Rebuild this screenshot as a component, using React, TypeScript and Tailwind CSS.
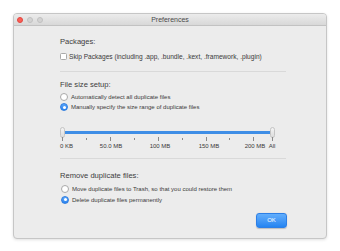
import React from 'react';

const font = { fontFamily: '"Liberation Sans", Arial, sans-serif' };

const Radio = ({ checked }: { checked?: boolean }) =>
  checked ? (
    <span className="flex h-[8px] w-[8px] shrink-0 items-center justify-center rounded-full border border-[#2f7de0] bg-gradient-to-b from-[#5aa6fa] to-[#2a84ef]">
      <span className="h-[3px] w-[3px] rounded-full bg-white" />
    </span>
  ) : (
    <span className="h-[8px] w-[8px] shrink-0 rounded-full border border-[#a9a9a9] bg-white" />
  );

const RadioRow = ({ label, checked }: { label: string; checked?: boolean }) => (
  <div className="flex h-[10px] items-center gap-[3px]">
    <Radio checked={checked} />
    <span className="text-[6px] leading-[8px] text-[#3a3a3a]">{label}</span>
  </div>
);

const Heading = ({ children, className = '' }: { children: React.ReactNode; className?: string }) => (
  <div className={`text-[7.6px] leading-[9px] text-[#3c3c3c] ${className}`}>{children}</div>
);

// tick x positions relative to the slider box (box starts at page x 60)
const ticks = [
  { x: 2, long: true },
  { x: 26 },
  { x: 50, long: true },
  { x: 74 },
  { x: 98, long: true },
  { x: 122 },
  { x: 146, long: true },
  { x: 169 },
  { x: 193, long: true },
  { x: 212, long: true },
];

const labels = [
  { text: '0 KB', x: 0, align: 'left' },
  { text: '50.0 MB', x: 51 },
  { text: '100 MB', x: 100 },
  { text: '150 MB', x: 149 },
  { text: '200 MB', x: 195 },
  { text: 'All', x: 212 },
];

const SizeSlider = () => (
  <div className="relative h-[26px] w-[226px]">
    <div className="absolute left-[4px] top-[5px] h-[3px] w-[208px] rounded-full bg-[#3f8ee6]" />
    <div className="absolute left-[0px] top-[1px] h-[11px] w-[5px] rounded-[3px] border border-[#c4c4c4] bg-gradient-to-b from-[#f4f4f4] to-[#dcdcdc]" />
    <div className="absolute left-[210px] top-[1px] h-[11px] w-[5px] rounded-[3px] border border-[#c4c4c4] bg-gradient-to-b from-[#f4f4f4] to-[#dcdcdc]" />
    <svg className="absolute left-0 top-[11px]" width="226" height="5">
      {ticks.map((t, i) => (
        <line
          key={i}
          x1={t.x + 0.5}
          x2={t.x + 0.5}
          y1={t.long ? 0 : 1}
          y2={t.long ? 4 : 3}
          stroke="#8a8a8a"
          strokeWidth="1"
        />
      ))}
    </svg>
    {labels.map((l) => (
      <span
        key={l.text}
        className={`absolute top-[17px] whitespace-nowrap text-[6px] leading-[7px] text-[#3a3a3a] ${
          l.align === 'left' ? '' : '-translate-x-1/2'
        }`}
        style={{ left: l.x }}
      >
        {l.text}
      </span>
    ))}
  </div>
);

export default function App() {
  return (
    <div className="h-[251px] w-[340px] bg-white pl-[13px] pt-[13px]" style={font}>
      <div className="flex h-[226px] w-[314px] flex-col overflow-hidden rounded-[4px] border border-[#c6c6c6] bg-[#ececec] shadow-[0_1px_3px_rgba(0,0,0,0.12)]">
        {/* title bar */}
        <div className="relative flex h-[12px] shrink-0 items-center justify-center border-b border-[#c2c2c2] bg-gradient-to-b from-[#ececec] to-[#d8d8d8]">
          <div className="absolute left-[3px] top-[2.5px] flex gap-[4px]">
            <span className="h-[6px] w-[6px] rounded-full bg-[#fb5f57] border border-[#e2463f]" />
            <span className="h-[6px] w-[6px] rounded-full bg-[#d3d3d3] border border-[#c0c0c0]" />
            <span className="h-[6px] w-[6px] rounded-full bg-[#d3d3d3] border border-[#c0c0c0]" />
          </div>
          <span className="text-[7px] leading-[9px] text-[#4a4a4a]">Preferences</span>
        </div>

        <div className="flex flex-1 flex-col pl-[46px] pr-[40px]">
          <Heading className="mt-[11px]">Packages:</Heading>
          <div className="mt-[6px] flex h-[9px] items-center gap-[2px]">
            <span className="h-[7px] w-[7px] shrink-0 rounded-[1.5px] border border-[#a9a9a9] bg-white" />
            <span className="text-[6.6px] leading-[8px] text-[#3a3a3a]">
              Skip Packages (including .app, .bundle, .kext, .framework, .plugin)
            </span>
          </div>
          <div className="mt-[10px] h-px w-[226px] bg-[#d9d9d9]" />

          <Heading className="mt-[8px]">File size setup:</Heading>
          <div className="mt-[3px]">
            <RadioRow label="Automatically detect all duplicate files" />
            <RadioRow label="Manually specify the size range of duplicate files" checked />
          </div>
          <div className="mt-[14px]">
            <SizeSlider />
          </div>
          <div className="mt-[6px] h-px w-[226px] bg-[#d9d9d9]" />

          <Heading className="mt-[12px]">Remove duplicate files:</Heading>
          <div className="mt-[3px] pl-[1px]">
            <div className="flex h-[11px] items-center">
              <RadioRow label="Move duplicate files to Trash, so that you could restore them" />
            </div>
            <div className="flex h-[11px] items-center">
              <RadioRow label="Delete duplicate files permanently" checked />
            </div>
          </div>
          <div className="mt-[8px] flex w-[227px] justify-end">
            <button className="flex h-[15px] w-[31px] items-center justify-center rounded-[3px] border border-[#2d7fe6] bg-gradient-to-b from-[#62aefc] to-[#2384f1] text-[6px] text-white shadow-[0_0.5px_1px_rgba(0,0,0,0.2)]">
              OK
            </button>
          </div>
        </div>
      </div>
    </div>
  );
}
